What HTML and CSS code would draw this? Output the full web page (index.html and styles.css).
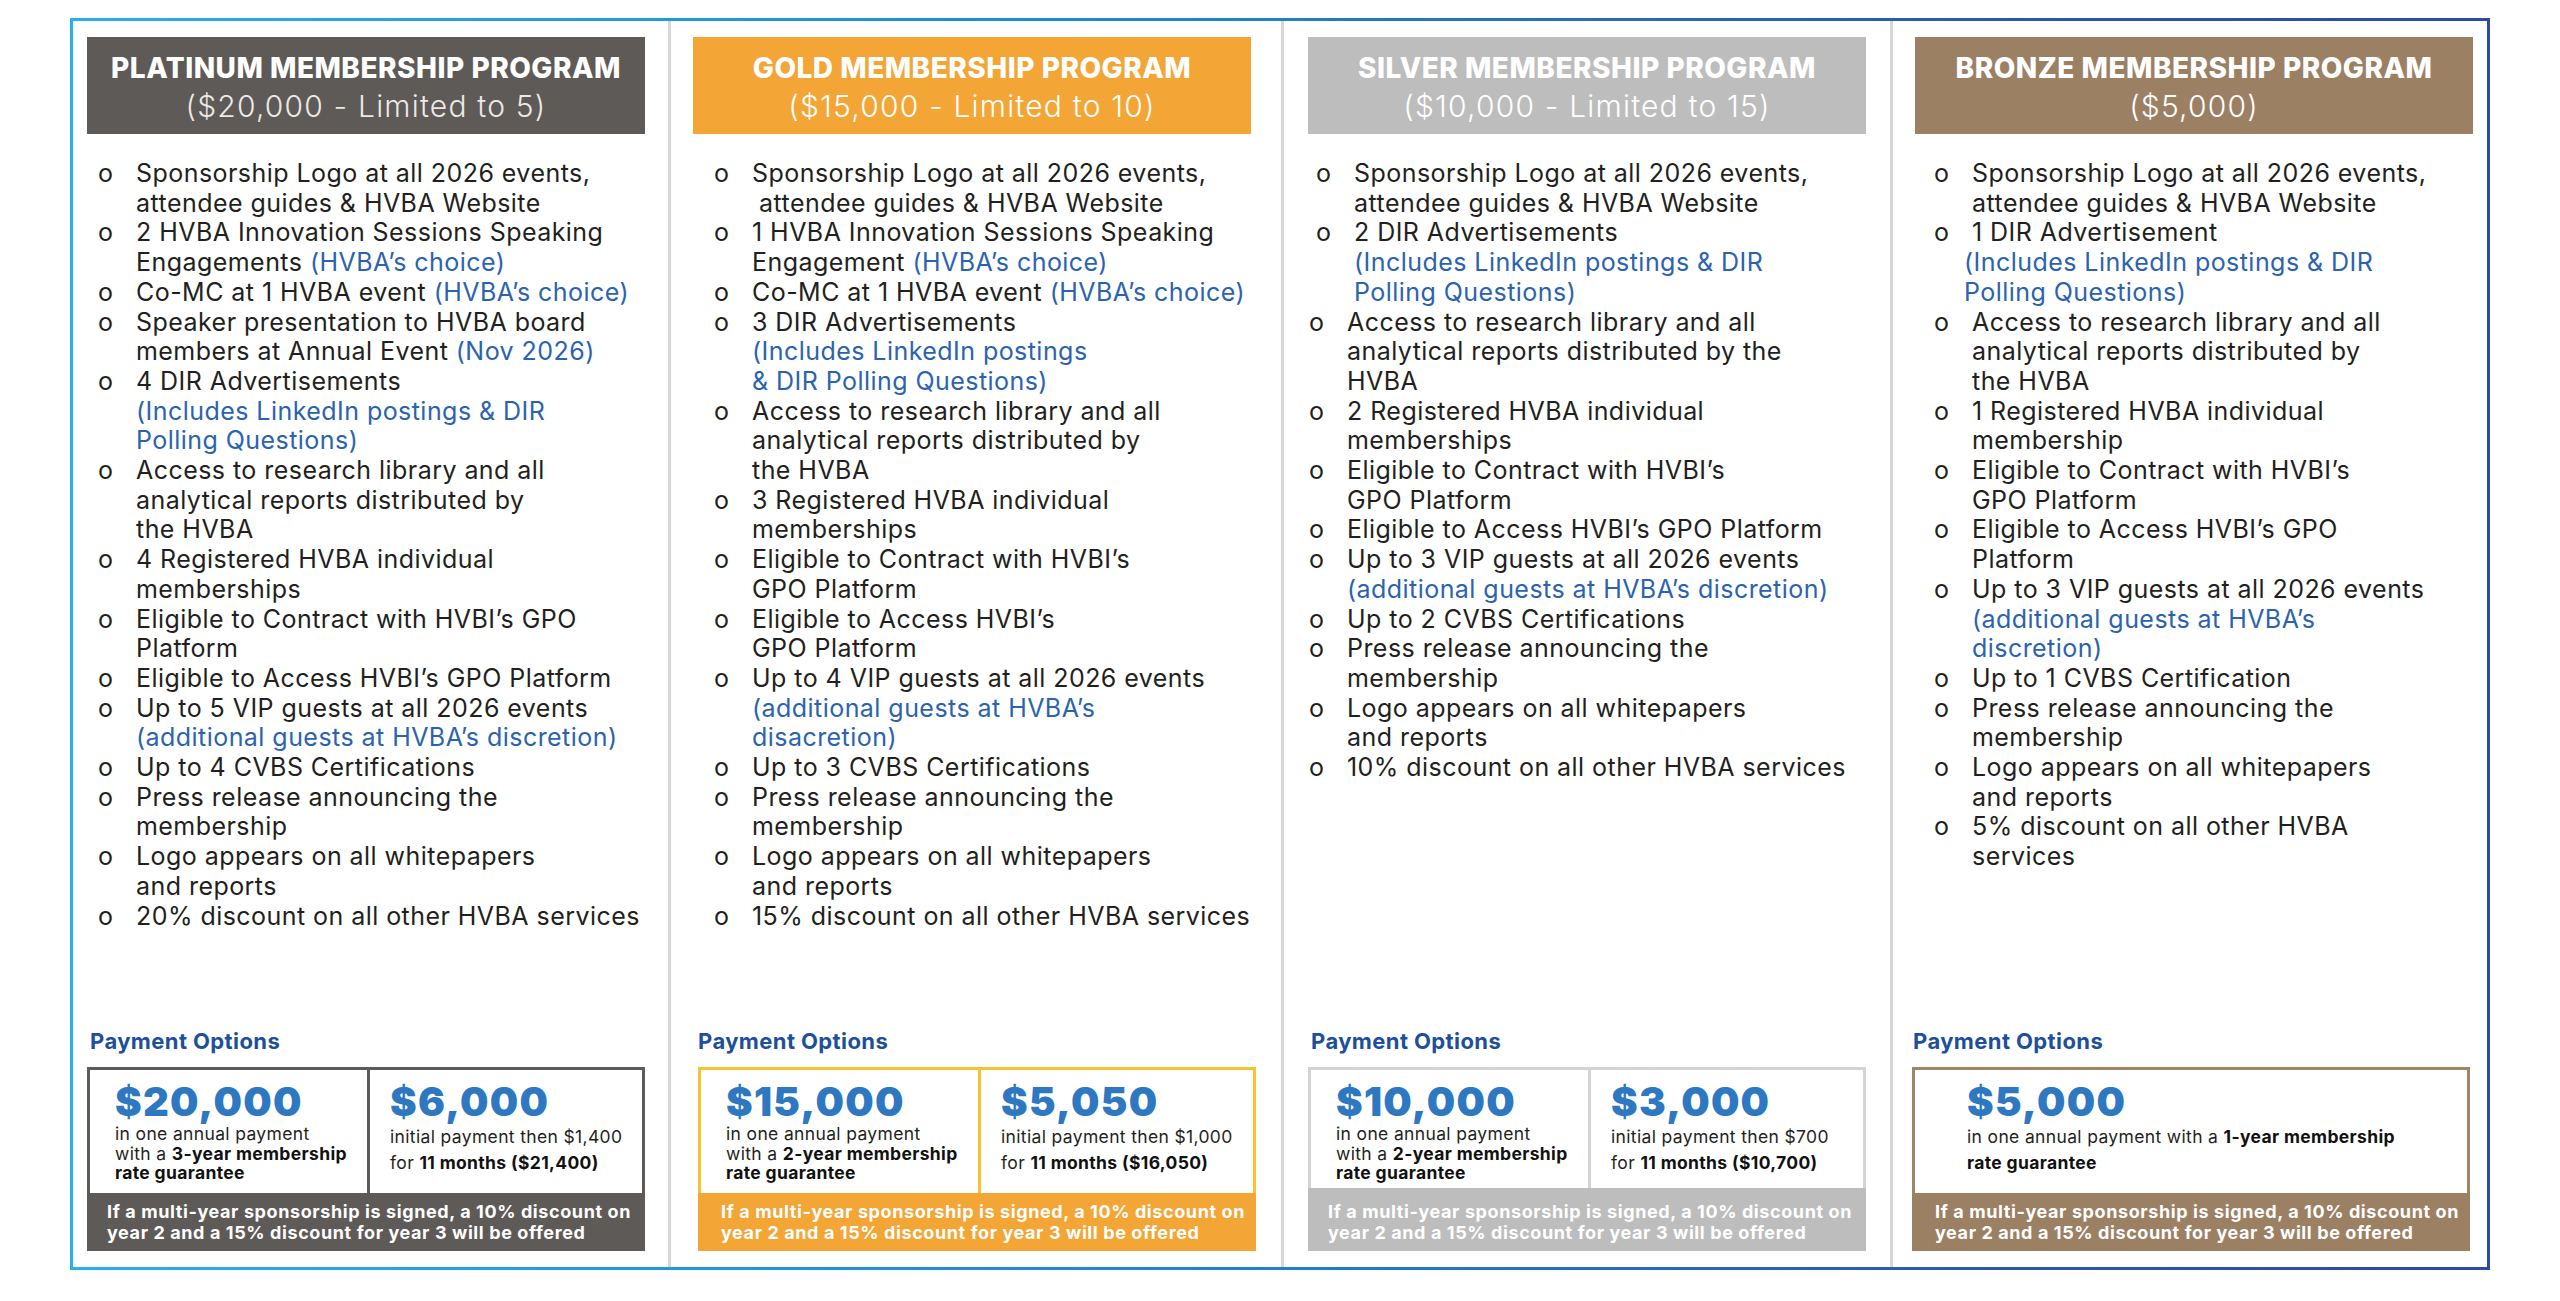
FILE: index.html
```html
<!DOCTYPE html>
<html lang="en">
<head>
<meta charset="utf-8">
<title>HVBA Membership Programs</title>
<link rel="stylesheet" href="styles.css">
</head>
<body>
<div class="frame">
  <div class="board">

    <section class="tier platinum">
      <header class="head">
        <div class="head-name">PLATINUM MEMBERSHIP PROGRAM</div>
        <div class="head-price">($20,000 - Limited to 5)</div>
      </header>
      <ul class="perks">
        <li><span class="dot">o</span><span class="txt">Sponsorship Logo at all 2026 events,<br>attendee guides &amp; HVBA Website</span></li>
        <li><span class="dot">o</span><span class="txt">2 HVBA Innovation Sessions Speaking<br>Engagements <span class="note">(HVBA’s choice)</span></span></li>
        <li><span class="dot">o</span><span class="txt">Co-MC at 1 HVBA event <span class="note">(HVBA’s choice)</span></span></li>
        <li><span class="dot">o</span><span class="txt">Speaker presentation to HVBA board<br>members at Annual Event <span class="note">(Nov 2026)</span></span></li>
        <li><span class="dot">o</span><span class="txt">4 DIR Advertisements<br><span class="note">(Includes LinkedIn postings &amp; DIR<br>Polling Questions)</span></span></li>
        <li><span class="dot">o</span><span class="txt">Access to research library and all<br>analytical reports distributed by<br>the HVBA</span></li>
        <li><span class="dot">o</span><span class="txt">4 Registered HVBA individual<br>memberships</span></li>
        <li><span class="dot">o</span><span class="txt">Eligible to Contract with HVBI’s GPO<br>Platform</span></li>
        <li><span class="dot">o</span><span class="txt">Eligible to Access HVBI’s GPO Platform</span></li>
        <li><span class="dot">o</span><span class="txt">Up to 5 VIP guests at all 2026 events<br><span class="note">(additional guests at HVBA’s discretion)</span></span></li>
        <li><span class="dot">o</span><span class="txt">Up to 4 CVBS Certifications</span></li>
        <li><span class="dot">o</span><span class="txt">Press release announcing the<br>membership</span></li>
        <li><span class="dot">o</span><span class="txt">Logo appears on all whitepapers<br>and reports</span></li>
        <li><span class="dot">o</span><span class="txt">20% discount on all other HVBA services</span></li>
      </ul>
      <div class="pay">
        <div class="pay-title">Payment Options</div>
        <div class="opts">
          <div class="opt">
            <div class="amt">$20,000</div>
            <div class="desc">in one annual payment<br>with a <b>3-year membership<br>rate guarantee</b></div>
          </div>
          <div class="opt">
            <div class="amt">$6,000</div>
            <div class="desc wide">initial payment then $1,400<br>for <b>11 months ($21,400)</b></div>
          </div>
        </div>
        <div class="footnote">If a multi-year sponsorship is signed, a 10% discount on<br>year 2 and a 15% discount for year 3 will be offered</div>
      </div>
    </section>

    <section class="tier gold">
      <header class="head">
        <div class="head-name">GOLD MEMBERSHIP PROGRAM</div>
        <div class="head-price">($15,000 - Limited to 10)</div>
      </header>
      <ul class="perks">
        <li><span class="dot">o</span><span class="txt">Sponsorship Logo at all 2026 events,<br><span class="indent">attendee guides &amp; HVBA Website</span></span></li>
        <li><span class="dot">o</span><span class="txt">1 HVBA Innovation Sessions Speaking<br>Engagement <span class="note">(HVBA’s choice)</span></span></li>
        <li><span class="dot">o</span><span class="txt">Co-MC at 1 HVBA event <span class="note">(HVBA’s choice)</span></span></li>
        <li><span class="dot">o</span><span class="txt">3 DIR Advertisements<br><span class="note">(Includes LinkedIn postings<br>&amp; DIR Polling Questions)</span></span></li>
        <li><span class="dot">o</span><span class="txt">Access to research library and all<br>analytical reports distributed by<br>the HVBA</span></li>
        <li><span class="dot">o</span><span class="txt">3 Registered HVBA individual<br>memberships</span></li>
        <li><span class="dot">o</span><span class="txt">Eligible to Contract with HVBI’s<br>GPO Platform</span></li>
        <li><span class="dot">o</span><span class="txt">Eligible to Access HVBI’s<br>GPO Platform</span></li>
        <li><span class="dot">o</span><span class="txt">Up to 4 VIP guests at all 2026 events<br><span class="note">(additional guests at HVBA’s<br>disacretion)</span></span></li>
        <li><span class="dot">o</span><span class="txt">Up to 3 CVBS Certifications</span></li>
        <li><span class="dot">o</span><span class="txt">Press release announcing the<br>membership</span></li>
        <li><span class="dot">o</span><span class="txt">Logo appears on all whitepapers<br>and reports</span></li>
        <li><span class="dot">o</span><span class="txt">15% discount on all other HVBA services</span></li>
      </ul>
      <div class="pay">
        <div class="pay-title">Payment Options</div>
        <div class="opts">
          <div class="opt">
            <div class="amt">$15,000</div>
            <div class="desc">in one annual payment<br>with a <b>2-year membership<br>rate guarantee</b></div>
          </div>
          <div class="opt">
            <div class="amt">$5,050</div>
            <div class="desc wide">initial payment then $1,000<br>for <b>11 months ($16,050)</b></div>
          </div>
        </div>
        <div class="footnote">If a multi-year sponsorship is signed, a 10% discount on<br>year 2 and a 15% discount for year 3 will be offered</div>
      </div>
    </section>

    <section class="tier silver">
      <header class="head">
        <div class="head-name">SILVER MEMBERSHIP PROGRAM</div>
        <div class="head-price">($10,000 - Limited to 15)</div>
      </header>
      <ul class="perks">
        <li class="in"><span class="dot">o</span><span class="txt">Sponsorship Logo at all 2026 events,<br>attendee guides &amp; HVBA Website</span></li>
        <li class="in"><span class="dot">o</span><span class="txt">2 DIR Advertisements<br><span class="note">(Includes LinkedIn postings &amp; DIR<br>Polling Questions)</span></span></li>
        <li><span class="dot">o</span><span class="txt">Access to research library and all<br>analytical reports distributed by the<br>HVBA</span></li>
        <li><span class="dot">o</span><span class="txt">2 Registered HVBA individual<br>memberships</span></li>
        <li><span class="dot">o</span><span class="txt">Eligible to Contract with HVBI’s<br>GPO Platform</span></li>
        <li><span class="dot">o</span><span class="txt">Eligible to Access HVBI’s GPO Platform</span></li>
        <li><span class="dot">o</span><span class="txt">Up to 3 VIP guests at all 2026 events<br><span class="note">(additional guests at HVBA’s discretion)</span></span></li>
        <li><span class="dot">o</span><span class="txt">Up to 2 CVBS Certifications</span></li>
        <li><span class="dot">o</span><span class="txt">Press release announcing the<br>membership</span></li>
        <li><span class="dot">o</span><span class="txt">Logo appears on all whitepapers<br>and reports</span></li>
        <li><span class="dot">o</span><span class="txt">10% discount on all other HVBA services</span></li>
      </ul>
      <div class="pay">
        <div class="pay-title">Payment Options</div>
        <div class="opts">
          <div class="opt">
            <div class="amt">$10,000</div>
            <div class="desc">in one annual payment<br>with a <b>2-year membership<br>rate guarantee</b></div>
          </div>
          <div class="opt">
            <div class="amt">$3,000</div>
            <div class="desc wide">initial payment then $700<br>for <b>11 months ($10,700)</b></div>
          </div>
        </div>
        <div class="footnote">If a multi-year sponsorship is signed, a 10% discount on<br>year 2 and a 15% discount for year 3 will be offered</div>
      </div>
    </section>

    <section class="tier bronze">
      <header class="head">
        <div class="head-name">BRONZE MEMBERSHIP PROGRAM</div>
        <div class="head-price">($5,000)</div>
      </header>
      <ul class="perks">
        <li><span class="dot">o</span><span class="txt">Sponsorship Logo at all 2026 events,<br>attendee guides &amp; HVBA Website</span></li>
        <li><span class="dot">o</span><span class="txt">1 DIR Advertisement<br><span class="note out">(Includes LinkedIn postings &amp; DIR<br>Polling Questions)</span></span></li>
        <li><span class="dot">o</span><span class="txt">Access to research library and all<br>analytical reports distributed by<br>the HVBA</span></li>
        <li><span class="dot">o</span><span class="txt">1 Registered HVBA individual<br>membership</span></li>
        <li><span class="dot">o</span><span class="txt">Eligible to Contract with HVBI’s<br>GPO Platform</span></li>
        <li><span class="dot">o</span><span class="txt">Eligible to Access HVBI’s GPO<br>Platform</span></li>
        <li><span class="dot">o</span><span class="txt">Up to 3 VIP guests at all 2026 events<br><span class="note">(additional guests at HVBA’s<br>discretion)</span></span></li>
        <li><span class="dot">o</span><span class="txt">Up to 1 CVBS Certification</span></li>
        <li><span class="dot">o</span><span class="txt">Press release announcing the<br>membership</span></li>
        <li><span class="dot">o</span><span class="txt">Logo appears on all whitepapers<br>and reports</span></li>
        <li><span class="dot">o</span><span class="txt">5% discount on all other HVBA<br>services</span></li>
      </ul>
      <div class="pay">
        <div class="pay-title">Payment Options</div>
        <div class="opts">
          <div class="opt single">
            <div class="amt">$5,000</div>
            <div class="desc wide">in one annual payment with a <b>1-year membership<br>rate guarantee</b></div>
          </div>
        </div>
        <div class="footnote">If a multi-year sponsorship is signed, a 10% discount on<br>year 2 and a 15% discount for year 3 will be offered</div>
      </div>
    </section>

  </div>
</div>
</body>
</html>
```
FILE: styles.css
```css
html, body {
  margin: 0;
  background: #ffffff;
}
body {
  font-family: Inter, "DejaVu Sans", "Noto Sans", sans-serif;
  color: #231f20;
}

.frame {
  margin: 18px 0 0 70px;
  width: 2420px;
  height: 1252px;
  padding: 3px;
  box-sizing: border-box;
  background: linear-gradient(to right, #27b0e9 0%, #1f86cd 45%, #2a58a8 80%, #2d4b9f 100%);
}
.board {
  height: 100%;
  background: #ffffff;
  display: grid;
  grid-template-columns: 595px 613px 609px 597px;
}

.tier {
  display: flex;
  flex-direction: column;
  padding-top: 16px;
  min-width: 0;
}
.tier + .tier {
  border-left: 3px solid #d6d6d6;
}

/* header block */
.head {
  width: 558px;
  height: 97px;
  box-sizing: border-box;
  padding-top: 13px;
  text-align: center;
  color: #ffffff;
}
.head-name {
  font-weight: 800;
  font-size: 28px;
  letter-spacing: 0.5px;
  line-height: 36px;
}
.head-price {
  font-weight: 300;
  font-size: 30px;
  letter-spacing: 1.2px;
  line-height: 40px;
}

/* perk list */
.perks {
  list-style: none;
  margin: 25px 0 0;
  padding: 0;
  font-size: 25px;
  letter-spacing: 0.45px;
  line-height: 29.7px;
  white-space: nowrap;
}
.perks li {
  display: flex;
}
.dot {
  width: 38px;
  flex: none;
}
.note {
  color: #2b63ae;
}
.note.out {
  display: block;
  margin-left: -8px;
}
.indent {
  padding-left: 7px;
}

/* payment section */
.pay {
  margin-top: auto;
  margin-bottom: 16px;
  width: 558px;
}
.pay-title {
  color: #1d4f9c;
  font-weight: 700;
  font-size: 22px;
  letter-spacing: 0.4px;
  line-height: 26px;
  margin-bottom: 13px;
}
.opts {
  display: flex;
  height: 126px;
  box-sizing: border-box;
  border: 3px solid;
  border-bottom: 0;
  background: #ffffff;
}
.opt {
  flex: 1;
  padding: 10px 0 0 25px;
  min-width: 0;
}
.opt + .opt {
  border-left: 3px solid;
  padding-left: 20px;
}
.opt.single {
  padding-left: 52px;
}
.amt {
  font-weight: 900;
  font-size: 40px;
  line-height: 44px;
  letter-spacing: 1.3px;
  color: #2e78c2;
}
.desc {
  font-size: 17.5px;
  letter-spacing: 0.35px;
  line-height: 19.5px;
  white-space: nowrap;
}
.desc.wide {
  line-height: 26px;
}
.desc b {
  font-weight: 700;
  color: #111111;
}
.footnote {
  height: 58px;
  box-sizing: border-box;
  padding: 8px 0 0 20px;
  color: #ffffff;
  font-weight: 700;
  font-size: 18px;
  letter-spacing: 0.6px;
  line-height: 21px;
  white-space: nowrap;
}

/* tier: platinum */
.platinum .head { margin-left: 14px; background: #5e5a57; }
.platinum .head-price { color: #ece9e7; }
.platinum .perks { padding-left: 25px; }
.platinum .pay { margin-left: 14px; }
.platinum .pay-title { padding-left: 3px; }
.platinum .opts, .platinum .opt { border-color: #5e5a57; }
.platinum .footnote { background: #5e5a57; }

/* tier: gold */
.gold .head { margin-left: 22px; background: #f3a535; }
.gold .perks { padding-left: 43px; }
.gold .pay { margin-left: 27px; }
.gold .opts, .gold .opt { border-color: #f8c230; }
.gold .footnote { background: #f3a535; padding-left: 23px; }

/* tier: silver */
.silver .head { margin-left: 24px; background: #bdbdbd; }
.silver .perks { padding-left: 25px; }
.silver .perks li.in { padding-left: 7px; }
.silver .pay { margin-left: 24px; }
.silver .pay-title { padding-left: 3px; }
.silver .opts { height: 121px; }
.silver .opts, .silver .opt { border-color: #d4d4d4; }
.silver .footnote { background: #bdbdbd; height: 63px; padding-top: 13px; }

/* tier: bronze */
.bronze .head { margin-left: 22px; background: #9c8064; }
.bronze .perks { padding-left: 41px; }
.bronze .pay { margin-left: 19px; }
.bronze .pay-title { padding-left: 1px; }
.bronze .opts, .bronze .opt { border-color: #a08466; }
.bronze .footnote { background: #9c8064; padding-left: 23px; }
```
